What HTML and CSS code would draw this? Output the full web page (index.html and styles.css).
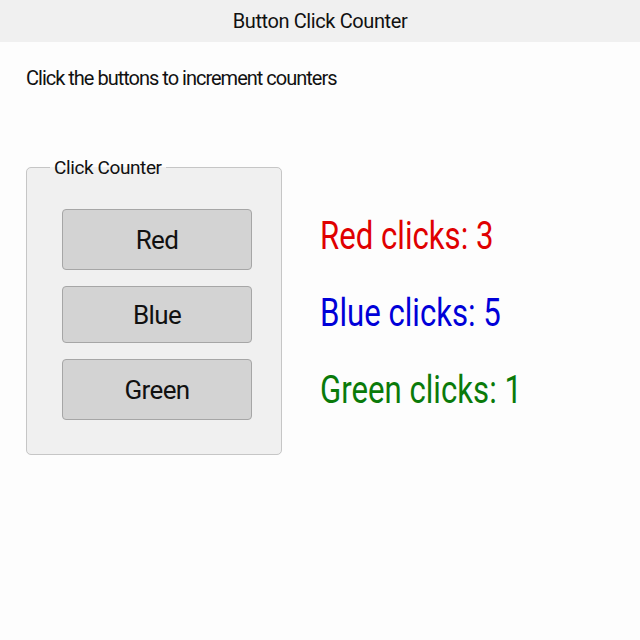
FILE: index.html
```html
<!DOCTYPE html>
<html lang="en">
<head>
    <meta charset="UTF-8">
    <meta name="viewport" content="width=device-width, initial-scale=1.0">
    <title>Button Click Counter</title>
    <link rel="stylesheet" href="styles.css">
</head>
<body>
    <header class="titlebar">Button Click Counter</header>

    <main class="window">
        <p class="intro">Click the buttons to increment counters</p>

        <div class="panel">
            <fieldset class="counter-box">
                <legend>Click Counter</legend>
                <button class="btn btn-tall" data-color="red">Red</button>
                <button class="btn" data-color="blue">Blue</button>
                <button class="btn btn-tall" data-color="green">Green</button>
            </fieldset>

            <div class="results">
                <div class="count red"><span id="redCount">Red clicks: 3</span></div>
                <div class="count blue"><span id="blueCount">Blue clicks: 5</span></div>
                <div class="count green"><span id="greenCount">Green clicks: 1</span></div>
            </div>
        </div>
    </main>

    <script>
        const counts = { red: 3, blue: 5, green: 1 };
        const names = { red: 'Red', blue: 'Blue', green: 'Green' };

        document.querySelectorAll('.btn').forEach(function(btn) {
            btn.addEventListener('click', function() {
                const color = btn.dataset.color;
                counts[color]++;
                document.getElementById(color + 'Count').textContent = names[color] + ' clicks: ' + counts[color];
            });
        });
    </script>
</body>
</html>
```

FILE: styles.css
```css
body {
    margin: 0;
    font-family: Roboto, "Liberation Sans", sans-serif;
    background: #fdfdfd;
    color: #111;
}
.titlebar {
    height: 42px;
    line-height: 42px;
    text-align: center;
    font-size: 20px;
    letter-spacing: -0.4px;
    background: #f0f0f0;
}
.window {
    padding: 24px 26px;
}
.intro {
    margin: 0;
    font-size: 20px;
    letter-spacing: -1px;
}
.panel {
    display: flex;
    align-items: flex-start;
    gap: 38px;
    margin-top: 66px;
}
.counter-box {
    width: 256px;
    box-sizing: border-box;
    margin: 0;
    padding: 30px 28px 34px 35px;
    border: 1px solid #c6c6c6;
    border-radius: 5px;
    background: #f0f0f0;
    display: flex;
    flex-direction: column;
    gap: 16px;
}
.counter-box legend {
    margin-left: -12px;
    padding: 0 4px;
    font-size: 19px;
    letter-spacing: -0.4px;
}
.btn {
    width: 190px;
    height: 57px;
    font-family: inherit;
    font-size: 26px;
    letter-spacing: -0.6px;
    color: #111;
    background: #d3d3d3;
    border: 1px solid #a6a6a6;
    border-radius: 4px;
    cursor: pointer;
}
.btn-tall {
    height: 61px;
}
.btn:hover {
    background: #cacaca;
}
.results {
    padding-top: 42px;
}
.count {
    font-size: 38px;
    line-height: 77px;
    white-space: nowrap;
}
/* narrow face for the big counters */
.count span {
    display: inline-block;
    transform: scaleX(0.82);
    transform-origin: left center;
}
.red {
    color: #e00000;
}
.blue {
    color: #0000d8;
}
.green {
    color: #0a7a0a;
}
```
